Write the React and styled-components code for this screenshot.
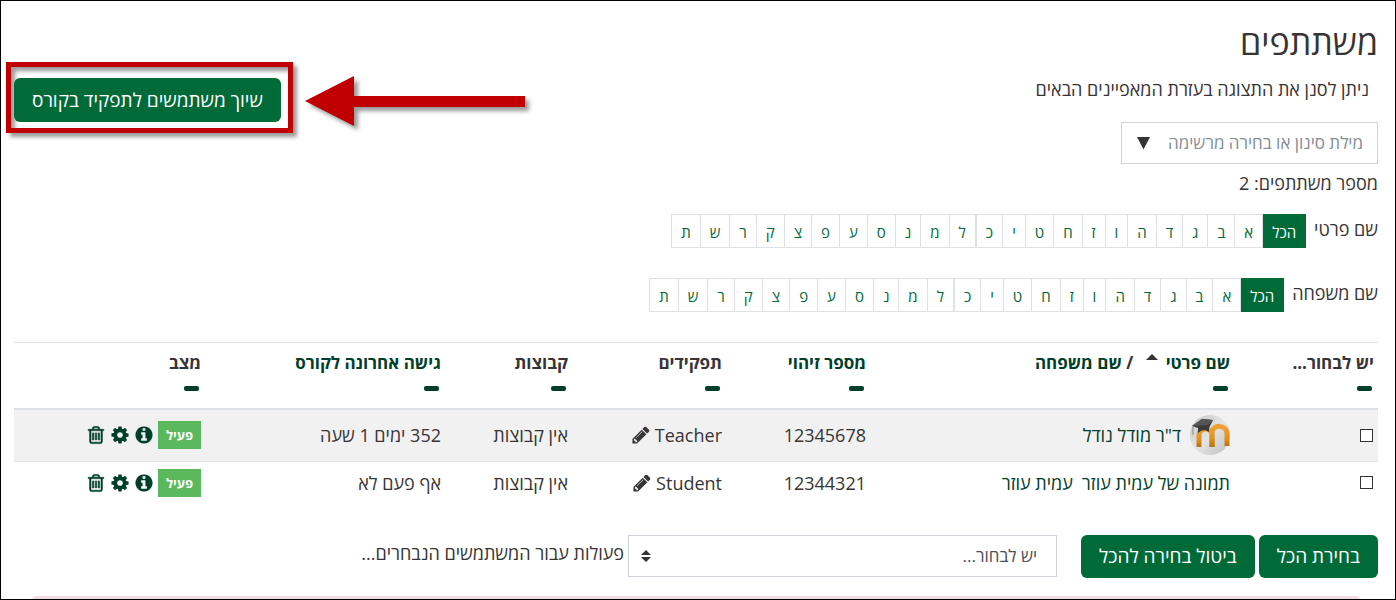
import React from 'react'
import styled, { createGlobalStyle } from 'styled-components'

const green = '#006a38'
const darkGreen = '#00402a'
const ink = '#373435'
const line = '#dee2e6'

const GlobalStyle = createGlobalStyle`
  *, *::before, *::after {
    box-sizing: border-box;
  }
  body {
    margin: 0;
    background: #fff;
    color: ${ink};
    font-family: 'Open Sans', 'Noto Sans', sans-serif;
    font-size: 18px;
    line-height: 26px;
  }
  button, input, select {
    font-family: inherit;
    font-size: inherit;
    line-height: inherit;
  }
`

const Page = styled.div`
  height: 100vh;
  overflow: hidden;
  padding: 24px 17px 0 13px;
  border: 1px solid #000;
`

const Header = styled.header`
  position: relative;
  display: flex;
  align-items: flex-start;
  justify-content: space-between;
`

const Title = styled.h2`
  margin: 0;
  font-size: 34px;
  font-weight: 400;
  line-height: 34px;
`

const Hint = styled.p`
  margin: 17px 0 20px;
  padding: 0 9px;
  line-height: 26px;
`

const FilterBox = styled.div`
  display: flex;
  align-items: center;
  width: 257px;
  height: 42px;
  padding: 0 14px;
  border: 1px solid #ced4da;
`

const FilterInput = styled.input`
  flex: 1;
  min-width: 0;
  padding: 0;
  border: 0;
  background: none;
  font-size: 17px;
  outline: 0;
  &::placeholder {
    color: #868e96;
    opacity: 1;
  }
`

const FilterToggle = styled.button`
  display: flex;
  padding: 0;
  border: 0;
  background: none;
  color: ${ink};
`

const Count = styled.p`
  margin: 6px 0 0;
`

const Button = styled.button`
  height: ${(p) => p.$height || 43}px;
  padding: 0 18px;
  border: 0;
  border-radius: 6px;
  background: ${green};
  color: #fff;
  font-size: 19px;
  white-space: nowrap;
`

const Highlight = styled.div`
  position: relative;
  margin-top: 53px;
  &::before {
    content: '';
    position: absolute;
    top: -16px;
    right: -12px;
    bottom: -11px;
    left: -8px;
    border: 5px solid #c00000;
    box-shadow: 4px 4px 4px rgba(0, 0, 0, 0.4), inset 4px 4px 4px rgba(0, 0, 0, 0.4);
    pointer-events: none;
  }
  ${Button} {
    position: relative;
  }
`

const Arrow = styled.svg`
  position: absolute;
  top: 46px;
  left: 289px;
  filter: drop-shadow(4px 4px 2px rgba(0, 0, 0, 0.4));
`

const Initials = styled.nav`
  display: flex;
  align-items: flex-start;
  height: 34px;
  margin-top: ${(p) => p.$top}px;
`

const InitialsLabel = styled.span`
  margin-left: 8px;
  line-height: 30px;
`

const Letters = styled.ul`
  display: flex;
  margin: 0;
  padding: 0;
  list-style: none;
  border: solid ${line};
  border-width: 0 0 0 1px;
`

const Letter = styled.a`
  display: block;
  height: 34px;
  padding: 0 9px;
  border: 1px solid ${(p) => (p.$active ? green : line)};
  border-left: 0;
  background: ${(p) => (p.$active ? green : '#fff')};
  color: ${(p) => (p.$active ? '#fff' : green)};
  font-size: 15px;
  line-height: 34px;
  text-decoration: none;
`

const Table = styled.table`
  width: 100%;
  margin-top: 30px;
  border-collapse: collapse;
  table-layout: fixed;
`

const Th = styled.th`
  height: 66px;
  padding: 7px 4px 0;
  border-top: 1px solid ${line};
  border-bottom: 2px solid ${line};
  font-size: 17px;
  font-weight: 700;
  text-align: right;
  vertical-align: top;
  white-space: nowrap;
`

const Row = styled.tr`
  background: ${(p) => (p.$striped ? '#f1f1f1' : '#fff')};
  border-bottom: ${(p) => (p.$striped ? `1px solid ${line}` : '0')};
`

const Td = styled.td`
  height: ${(p) => (p.$tall ? 53 : 42)}px;
  padding: 0 4px;
  white-space: nowrap;
`

const Link = styled.a`
  color: ${darkGreen};
  text-decoration: none;
  svg {
    display: block;
  }
`

const Collapse = styled.button`
  display: block;
  width: 15px;
  height: 5px;
  margin: 10px 2px 0;
  padding: 0;
  border: 0;
  border-radius: 2px;
  background: ${darkGreen};
`

const SortUp = styled.span`
  display: inline-block;
  margin: 0 8px;
  border: solid transparent;
  border-width: 0 6px 6px;
  border-bottom-color: ${ink};
  vertical-align: 9px;
`

const Checkbox = styled.input`
  display: block;
  appearance: none;
  width: 13px;
  height: 13px;
  margin: 0 1px;
  border: 1px solid #333;
  background: #fff;
`

const Inline = styled.div`
  display: flex;
  align-items: center;
  gap: ${(p) => p.$gap}px;
`

const Status = styled.span`
  padding: 0 8px;
  background: #5cb85c;
  color: #fff;
  font-size: 13px;
  font-weight: 700;
  line-height: 28px;
`

const IconButton = styled.button`
  display: flex;
  padding: 0;
  border: 0;
  background: none;
  color: ${(p) => p.$color || darkGreen};
`

const BulkActions = styled.form`
  display: flex;
  align-items: flex-start;
  gap: 4px;
  margin-top: 31px;
`

const SelectBox = styled.div`
  position: relative;
  width: 429px;
  margin-right: 20px;
  svg {
    position: absolute;
    top: 14px;
    left: 13px;
    pointer-events: none;
  }
`

const Select = styled.select`
  appearance: none;
  display: block;
  width: 100%;
  height: 42px;
  padding: 0 19px;
  border: 1px solid #ced4da;
  border-radius: 0;
  background: #fff;
  color: #495057;
  font-size: 17px;
`

const BulkLabel = styled.label`
  line-height: 36px;
`

const Alert = styled.div`
  height: 40px;
  margin: 18px 18px 0;
  border-radius: 4px;
  background: #f2dede;
`

const paths = {
  trash:
    'M704 736v576q0 14-9 23t-23 9h-64q-14 0-23-9t-9-23v-576q0-14 9-23t23-9h64q14 0 23 9t9 23zm256 0v576q0 14-9 23t-23 9h-64q-14 0-23-9t-9-23v-576q0-14 9-23t23-9h64q14 0 23 9t9 23zm256 0v576q0 14-9 23t-23 9h-64q-14 0-23-9t-9-23v-576q0-14 9-23t23-9h64q14 0 23 9t9 23zm128 724v-948h-896v948q0 22 7 40.5t14.5 27 10.5 8.5h832q3 0 10.5-8.5t14.5-27 7-40.5zm-672-1076h448l-48-117q-7-9-17-11h-317q-10 2-17 11zm928 32v64q0 14-9 23t-23 9h-96v948q0 83-47 143.5t-113 60.5h-832q-66 0-113-58.5t-47-141.5v-952h-96q-14 0-23-9t-9-23v-64q0-14 9-23t23-9h309l70-167q15-37 54-63t79-26h320q40 0 79 26t54 63l70 167h309q14 0 23 9t9 23z',
  cog:
    'M1152 896q0-106-75-181t-181-75-181 75-75 181 75 181 181 75 181-75 75-181zm512-109v222q0 12-8 23t-20 13l-185 28q-19 54-39 91 35 50 107 138 10 12 10 25t-9 23q-27 37-99 108t-94 71q-12 0-26-9l-138-108q-44 23-91 38-16 136-29 186-7 28-36 28h-222q-14 0-24.5-8.5t-11.5-21.5l-28-184q-49-16-90-37l-141 107q-10 9-25 9-14 0-25-11-126-114-165-168-7-10-7-23 0-12 8-23 15-21 51-66.5t54-70.5q-27-50-41-99l-183-27q-13-2-21-12.5t-8-23.5v-222q0-12 8-23t19-13l186-28q14-46 39-92-40-57-107-138-10-12-10-24 0-10 9-23 26-36 98.5-107.5t94.5-71.5q13 0 26 10l138 107q44-23 91-38 16-136 29-186 7-28 36-28h222q14 0 24.5 8.5t11.5 21.5l28 184q49 16 90 37l142-107q9-9 24-9 13 0 25 10 129 119 165 170 7 8 7 22 0 12-8 23-15 21-51 66.5t-54 70.5q26 50 41 98l183 28q13 2 21 12.5t8 23.5z',
  info:
    'M1152 1376v-160q0-14-9-23t-23-9h-96v-512q0-14-9-23t-23-9h-320q-14 0-23 9t-9 23v160q0 14 9 23t23 9h96v320h-96q-14 0-23 9t-9 23v160q0 14 9 23t23 9h448q14 0 23-9t9-23zm-128-896v-160q0-14-9-23t-23-9h-192q-14 0-23 9t-9 23v160q0 14 9 23t23 9h192q14 0 23-9t9-23zm640 416q0 209-103 385.5t-279.5 279.5-385.5 103-385.5-103-279.5-279.5-103-385.5 103-385.5 279.5-279.5 385.5-103 385.5 103 279.5 279.5 103 385.5z',
  pencil:
    'M491 1536l91-91-235-235-91 91v107h128v128h107zm523-928q0-22-22-22-10 0-17 7l-542 542q-7 7-7 17 0 22 22 22 10 0 17-7l542-542q7-7 7-17zm-54-192l416 416-832 832h-416v-416zm683 96q0 53-37 90l-166 166-416-416 166-165q36-38 90-38 53 0 91 38l235 234q37 39 37 91z',
}

const Icon = ({ name, bold }) => (
  <svg
    width="20"
    height="20"
    viewBox="0 0 1792 1792"
    fill="currentColor"
    stroke="currentColor"
    strokeWidth={bold ? 50 : 0}
  >
    <path d={paths[name]} />
  </svg>
)

const Avatar = () => (
  <svg width="40" height="40" viewBox="0 0 40 40">
    <defs>
      <linearGradient id="ball" x1="0" y1="0" x2="1" y2="1">
        <stop offset="0" stopColor="#c4c4c4" />
        <stop offset="0.5" stopColor="#e4e4e4" />
        <stop offset="1" stopColor="#bdbdbd" />
      </linearGradient>
      <linearGradient id="knit" x1="0" y1="0" x2="0" y2="1">
        <stop offset="0" stopColor="#eda233" />
        <stop offset="0.6" stopColor="#dd9220" />
        <stop offset="1" stopColor="#b8700d" />
      </linearGradient>
    </defs>
    <circle cx="20" cy="20" r="20" fill="url(#ball)" />
    <g fill="none" stroke="url(#knit)" strokeWidth="5">
      <path d="M9 32V20c0-8 13-8 13 0v12" />
      <path d="M22 32V18c0-9 15-9 15 1v12" />
    </g>
    <path d="M2 11l10-7 11 1-4 8v4c-4-3-8-2-11 1v-5z" fill="#3b3b3b" />
    <path d="M2 11l10-7 11 1-5 5z" fill="#565656" />
    <path d="M3 12v8" stroke="#888" />
  </svg>
)

const firstLetters = ['א', 'ב', 'ג', 'ד', 'ה', 'ו', 'ז', 'ח', 'ט', 'י', 'כ']
const lastLetters = ['ל', 'מ', 'נ', 'ס', 'ע', 'פ', 'צ', 'ק', 'ר', 'ש', 'ת']

const InitialsBar = ({ label, top }) => (
  <Initials $top={top} aria-label={label}>
    <InitialsLabel>{label}</InitialsLabel>
    <Letters>
      <li>
        <Letter href="#" $active>
          הכל
        </Letter>
      </li>
      {firstLetters.map((letter) => (
        <li key={letter}>
          <Letter href="#">{letter}</Letter>
        </li>
      ))}
    </Letters>
    <Letters>
      {lastLetters.map((letter) => (
        <li key={letter}>
          <Letter href="#">{letter}</Letter>
        </li>
      ))}
    </Letters>
  </Initials>
)

const columns = [
  { key: 'select', label: 'יש לבחור...', width: 144 },
  { key: 'name', width: 364 },
  { key: 'id', label: 'מספר זיהוי', width: 144, sortable: true },
  { key: 'roles', label: 'תפקידים', width: 154 },
  { key: 'groups', label: 'קבוצות', width: 127 },
  { key: 'access', label: 'גישה אחרונה לקורס', width: 240, sortable: true },
  { key: 'status', label: 'מצב', width: 191 },
]
const total = columns.reduce((sum, col) => sum + col.width, 0)

const Col = styled.col`
  width: ${(p) => (p.$width / total) * 100}%;
`

const users = [
  {
    name: 'ד"ר מודל נודל',
    avatar: true,
    id: '12345678',
    role: 'Teacher',
    access: '352 ימים 1 שעה',
  },
  {
    name: 'עמית עוזר',
    id: '12344321',
    role: 'Student',
    access: 'אף פעם לא',
  },
]

const HeadCell = ({ col }) => {
  if (col.key === 'name') {
    return (
      <>
        <Link href="#">שם פרטי</Link>
        <SortUp />
        {' / '}
        <Link href="#">שם משפחה</Link>
      </>
    )
  }
  return col.sortable ? <Link href="#">{col.label}</Link> : col.label
}

const UserRow = ({ user, striped }) => (
  <Row $striped={striped}>
    <Td $tall={striped}>
      <Checkbox type="checkbox" aria-label={user.name} />
    </Td>
    <Td>
      <Inline $gap={9}>
        <Link href="#">{user.avatar ? <Avatar /> : `תמונה של ${user.name}`}</Link>
        <Link href="#">{user.name}</Link>
      </Inline>
    </Td>
    <Td>{user.id}</Td>
    <Td>
      <Inline $gap={4}>
        {user.role}
        <IconButton type="button" $color={ink} aria-label="עריכה">
          <Icon name="pencil" />
        </IconButton>
      </Inline>
    </Td>
    <Td>אין קבוצות</Td>
    <Td>{user.access}</Td>
    <Td>
      <Inline $gap={4}>
        <Status>פעיל</Status>
        <IconButton type="button" aria-label="מידע">
          <Icon name="info" />
        </IconButton>
        <IconButton type="button" aria-label="הגדרות">
          <Icon name="cog" />
        </IconButton>
        <IconButton type="button" aria-label="מחיקה">
          <Icon name="trash" bold />
        </IconButton>
      </Inline>
    </Td>
  </Row>
)

const App = () => (
  <Page dir="rtl">
    <GlobalStyle />
    <Header>
      <div>
        <Title>משתתפים</Title>
        <Hint>ניתן לסנן את התצוגה בעזרת המאפיינים הבאים</Hint>
        <FilterBox>
          <FilterInput
            placeholder="מילת סינון או בחירה מרשימה"
            aria-label="מילת סינון או בחירה מרשימה"
          />
          <FilterToggle type="button" aria-label="פתיחת הרשימה">
            <svg width="15" height="14" viewBox="0 0 15 14" fill="currentColor">
              <path d="M1 1h13L7.500 13.500z" />
            </svg>
          </FilterToggle>
        </FilterBox>
        <Count>מספר משתתפים: 2</Count>
      </div>
      <Highlight>
        <Button type="button" $height={44}>
          שיוך משתמשים לתפקיד בקורס
        </Button>
      </Highlight>
      <Arrow width="224" height="60" viewBox="0 0 224 60">
        <path d="M2 30L51 5v20h171v11H51v19z" fill="#c00000" />
      </Arrow>
    </Header>
    <InitialsBar label="שם פרטי" top={18} />
    <InitialsBar label="שם משפחה" top={30} />
    <Table>
      <colgroup>
        {columns.map((col) => (
          <Col key={col.key} $width={col.width} />
        ))}
      </colgroup>
      <thead>
        <tr>
          {columns.map((col) => (
            <Th key={col.key} scope="col">
              <HeadCell col={col} />
              <Collapse type="button" aria-label="הסתרה" />
            </Th>
          ))}
        </tr>
      </thead>
      <tbody>
        {users.map((user, index) => (
          <UserRow key={user.id} user={user} striped={index % 2 === 0} />
        ))}
      </tbody>
    </Table>
    <BulkActions>
      <Button type="button">בחירת הכל</Button>
      <Button type="button">ביטול בחירה להכל</Button>
      <SelectBox>
        <Select id="bulk-action">
          <option>יש לבחור...</option>
        </Select>
        <svg width="10" height="14" viewBox="0 0 10 14" fill={ink}>
          <path d="M5 1l5 5H0zM5 13L0 8h10z" />
        </svg>
      </SelectBox>
      <BulkLabel htmlFor="bulk-action">פעולות עבור המשתמשים הנבחרים...</BulkLabel>
    </BulkActions>
    <Alert role="alert" />
  </Page>
)

export default App
